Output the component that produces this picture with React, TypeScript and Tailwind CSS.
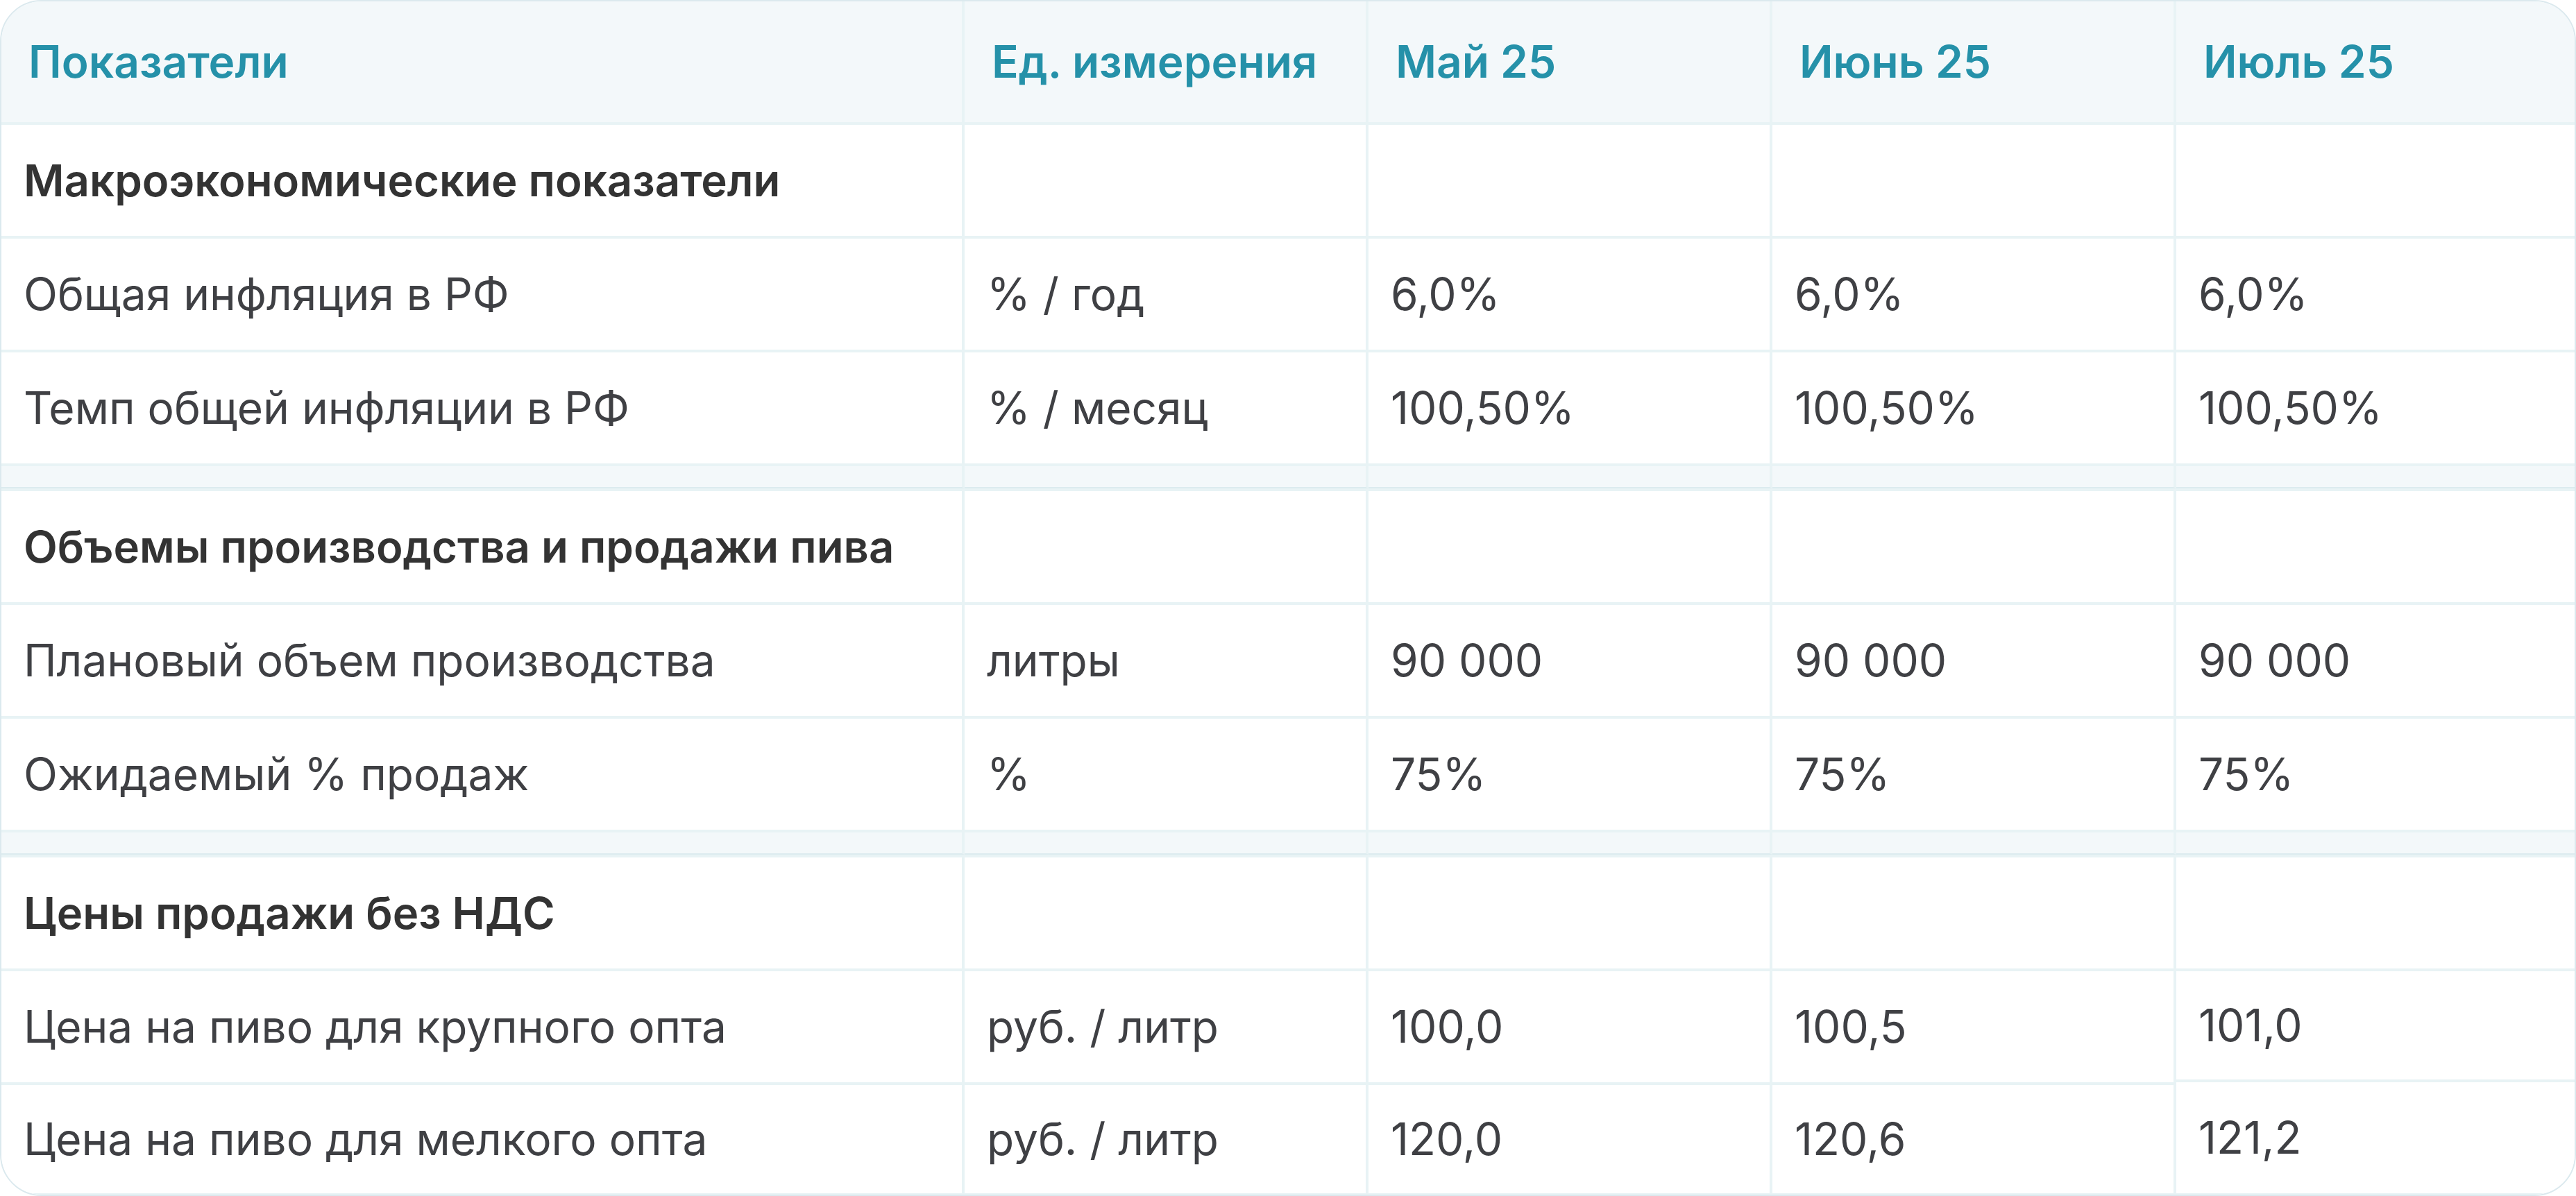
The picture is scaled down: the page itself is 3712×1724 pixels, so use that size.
import React from 'react';

type Row = [string, string, string, string, string];

interface Section {
  title: string;
  rows: Row[];
}

const months = ['Май 25', 'Июнь 25', 'Июль 25'];

const sections: Section[] = [
  {
    title: 'Макроэкономические показатели',
    rows: [
      ['Общая инфляция в РФ', '% / год', '6,0%', '6,0%', '6,0%'],
      ['Темп общей инфляции в РФ', '% / месяц', '100,50%', '100,50%', '100,50%'],
    ],
  },
  {
    title: 'Объемы производства и продажи пива',
    rows: [
      ['Плановый объем производства', 'литры', '90 000', '90 000', '90 000'],
      ['Ожидаемый % продаж', '%', '75%', '75%', '75%'],
    ],
  },
  {
    title: 'Цены продажи без НДС',
    rows: [
      ['Цена на пиво для крупного опта', 'руб. / литр', '100,0', '100,5', '101,0'],
      ['Цена на пиво для мелкого опта', 'руб. / литр', '120,0', '120,6', '121,2'],
    ],
  },
];

const gridCols = 'grid grid-cols-[1388px_582px_582px_582px_1fr]';

export default function App() {
  return (
    <div className="w-[3712px] h-[1724px] bg-white font-[Inter,'Noto_Sans',sans-serif]">
      <div className="flex flex-col h-full border-2 border-[#dbe9ee] rounded-[60px] overflow-hidden">
        {/* Header */}
        <div className={`${gridCols} h-[178px] bg-[#f3f8fa]`}>
          {['Показатели', 'Ед. измерения', ...months].map((h, i) => (
            <div
              key={h}
              className={`flex items-center pl-[39px] border-b-4 border-[#e8f3f5] text-[64px] font-semibold text-[#2591a9] ${
                i < 4 ? 'border-r-4' : ''
              }`}
            >
              {h}
            </div>
          ))}
        </div>

        {sections.map((section, si) => {
          const isLast = si === sections.length - 1;
          return (
            <React.Fragment key={section.title}>
              {/* Section title */}
              <div className={`${gridCols} ${si > 0 ? 'h-[168px]' : 'h-[164px]'}`}>
                {[0, 1, 2, 3, 4].map((c) => (
                  <div
                    key={c}
                    className={`flex items-center pl-[32px] border-b-4 border-[#e8f3f5] text-[63.5px] font-semibold text-[#333333] ${
                      c < 4 ? 'border-r-4' : ''
                    } ${si > 0 ? 'border-t-4' : ''}`}
                  >
                    {c === 0 ? section.title : ''}
                  </div>
                ))}
              </div>

              {/* Data rows */}
              {section.rows.map((row, ri) => {
                const lastRow = isLast && ri === section.rows.length - 1;
                const preLastRow = isLast && ri === section.rows.length - 2;
                return (
                  <div key={ri} className={`${gridCols} ${lastRow ? 'flex-1' : 'h-[164px]'}`}>
                    {row.map((v, c) => (
                      <div
                        key={c}
                        className={`flex items-center pl-[32px] border-[#e8f3f5] text-[64px] text-[#3f4044] bg-white ${
                          c < 4 ? 'border-r-4' : ''
                        } ${lastRow ? 'border-b-2' : 'border-b-4'} ${
                          c === 4 && preLastRow ? 'mb-1' : ''
                        } ${c === 4 && lastRow ? '-mt-1' : ''}`}
                      >
                        {v}
                      </div>
                    ))}
                  </div>
                );
              })}

              {/* Spacer */}
              {!isLast && (
                <div className={`${gridCols} h-[32px] bg-[#f3f8fa]`}>
                  {[0, 1, 2, 3, 4].map((c) => (
                    <div
                      key={c}
                      className={`border-b-2 border-b-[#dcebef] border-r-[#e8f3f5] ${c < 4 ? 'border-r-4' : ''}`}
                    />
                  ))}
                </div>
              )}
            </React.Fragment>
          );
        })}
      </div>
    </div>
  );
}
